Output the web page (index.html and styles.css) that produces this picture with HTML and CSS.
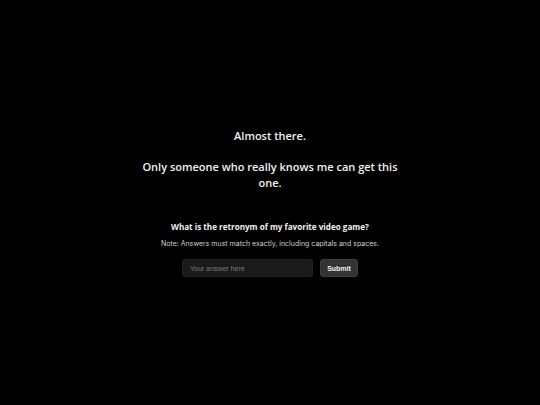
FILE: index.html
```html
<!DOCTYPE html>
<html lang="en">
<head>
  <meta charset="UTF-8" />
  <meta name="viewport" content="width=device-width, initial-scale=1.0"/>
  <title>Almost there</title>
  <link rel="stylesheet" href="styles.css">
</head>
<body>
  <div class="main">
    <!-- Heading message -->
    <h1 class="title">Almost there.<br><br>Only someone who really knows me can get this one.</h1>

    <!-- Question card -->
    <div class="question">
      <h2 class="prompt">What is the retronym of my favorite video game?</h2>
      <p class="note">Note: Answers must match exactly, including capitals and spaces.</p>

      <form class="answerForm" onsubmit="return false;">
        <input type="text" class="answerInput" placeholder="Your answer here"/>
        <button type="submit" class="submitButton">Submit</button>
      </form>
    </div>
  </div>
</body>
</html>
```

FILE: styles.css
```css
/* Base reset */
* {
  box-sizing: border-box;
  margin: 0;
  padding: 0;
}

body {
  background: #000;
  color: #f2f2f2;
  font-family: "Open Sans", "Liberation Sans", sans-serif;
}

.main {
  min-height: 100vh;
  display: flex;
  flex-direction: column;
  align-items: center;
  justify-content: center;
  gap: 31px;
  text-align: center;
}

.title {
  max-width: 262px;
  font-size: 11px;
  font-weight: 600;
  line-height: 15.5px;
}

.question {
  display: flex;
  flex-direction: column;
  align-items: center;
}

.prompt {
  font-size: 8.1px;
  font-weight: 700;
  line-height: 11px;
}

.note {
  margin-top: 7px;
  font-family: "Inter", "Liberation Sans", sans-serif;
  font-size: 7px;
  color: #cfcfcf;
}

.answerForm {
  display: flex;
  gap: 7px;
  margin-top: 11px;
}

.answerInput {
  width: 131px;
  height: 18px;
  padding: 0 7px;
  background-color: #1a1a1a;
  border: 1px solid #222;
  border-radius: 3px;
  color: #eee;
  font-family: "Liberation Sans", sans-serif;
  font-size: 7px;
  outline: none;
}
.answerInput::placeholder {
  color: #7a7a7a;
}

.submitButton {
  width: 38px;
  height: 18px;
  background-color: #333;
  border: 1px solid #3c3c3c;
  border-radius: 3px;
  color: #f0f0f0;
  font-family: "Liberation Sans", sans-serif;
  font-size: 7px;
  font-weight: 600;
  cursor: pointer;
}
```
